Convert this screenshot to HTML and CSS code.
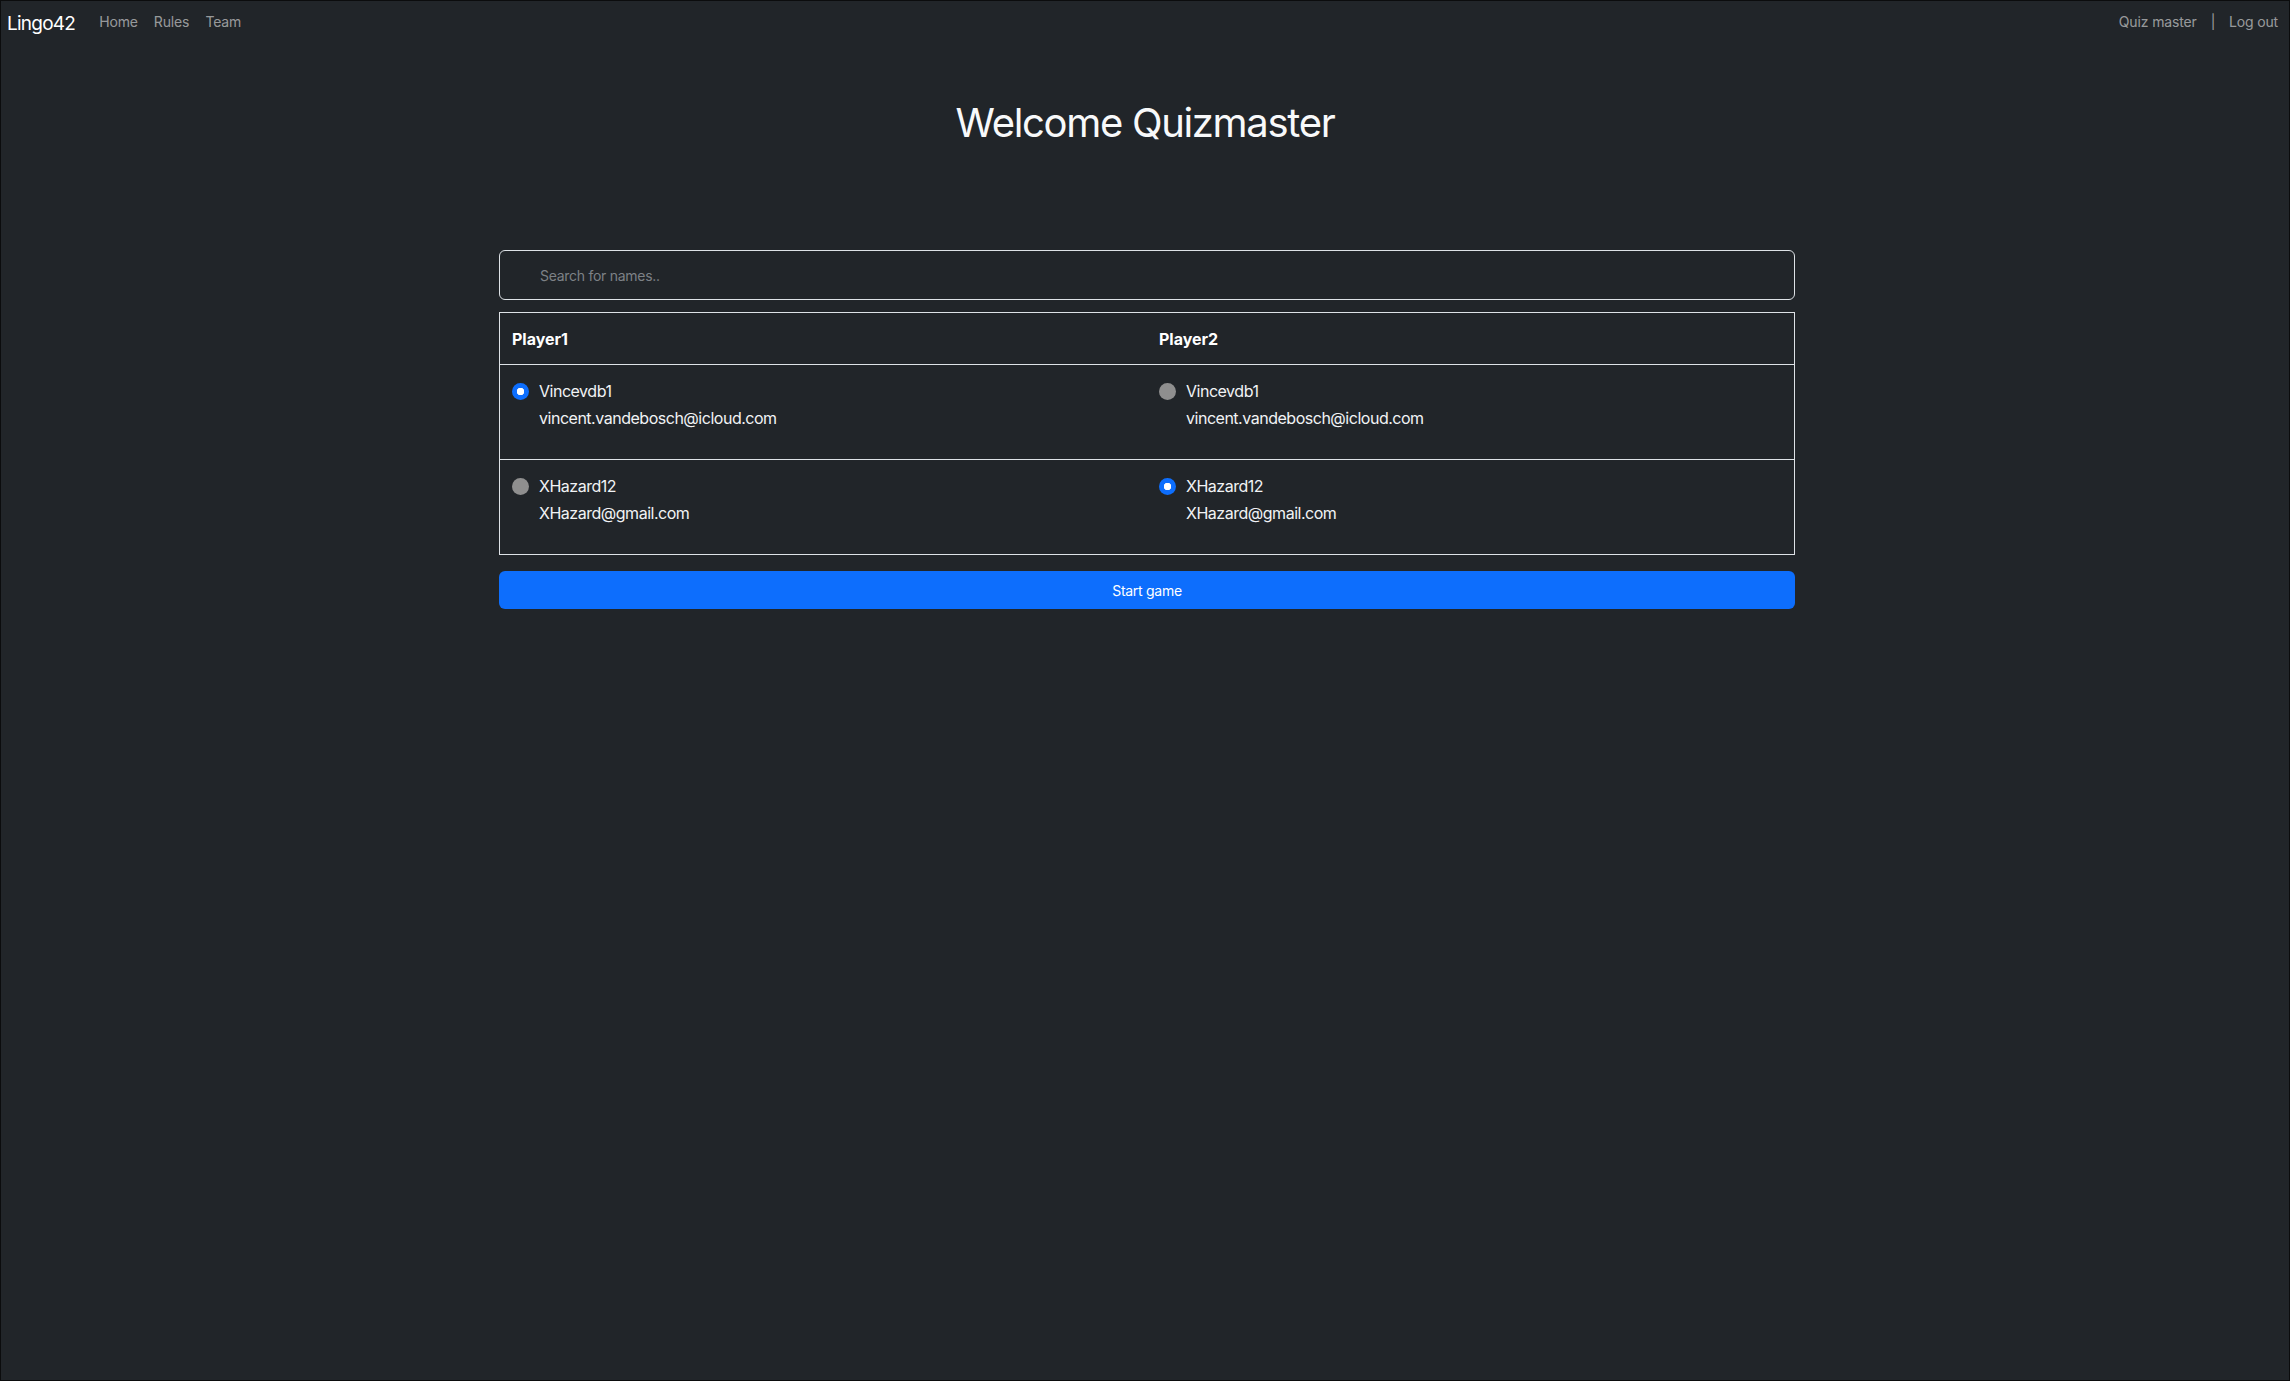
FILE: index.html
```html
<!DOCTYPE html>
<html lang="en">

<head>
    <meta charset="UTF-8">
    <meta name="viewport" content="width=device-width, initial-scale=1.0">
    <title>Lingo42</title>
    <link rel="stylesheet" href="styles.css">
</head>

<body>

    <nav class="navbar">
        <div class="left-section">
            <a class="brand" href="#">Lingo42</a>
            <a class="nav-link" href="#">Home</a>
            <a class="nav-link" href="#">Rules</a>
            <a class="nav-link" href="#">Team</a>
        </div>
        <div class="right-section">
            <a class="nav-link" href="#">Quiz master</a>
            <span class="divider">|</span>
            <a class="nav-link" href="#">Log out</a>
        </div>
    </nav>

    <h1 class="title">Welcome Quizmaster</h1>

    <div class="container">
        <input type="text" class="search" placeholder="Search for names..">

        <table class="players">
            <thead>
                <tr>
                    <th>Player1</th>
                    <th>Player2</th>
                </tr>
            </thead>
            <tbody>
                <tr>
                    <td>
                        <label class="player">
                            <span class="radio checked"></span>
                            <span class="name">Vincevdb1</span>
                        </label>
                        <div class="email">vincent.vandebosch@icloud.com</div>
                    </td>
                    <td>
                        <label class="player">
                            <span class="radio"></span>
                            <span class="name">Vincevdb1</span>
                        </label>
                        <div class="email">vincent.vandebosch@icloud.com</div>
                    </td>
                </tr>
                <tr>
                    <td>
                        <label class="player">
                            <span class="radio"></span>
                            <span class="name">XHazard12</span>
                        </label>
                        <div class="email">XHazard@gmail.com</div>
                    </td>
                    <td>
                        <label class="player">
                            <span class="radio checked"></span>
                            <span class="name">XHazard12</span>
                        </label>
                        <div class="email">XHazard@gmail.com</div>
                    </td>
                </tr>
            </tbody>
        </table>

        <button class="start">Start game</button>
    </div>

</body>

</html>
```

FILE: styles.css
```css
* {
    margin: 0;
    padding: 0;
    box-sizing: border-box;
}

html,
body {
    height: 100%;
}

body {
    font-family: Inter, "Noto Sans", sans-serif;
    font-size: 16px;
    line-height: 1.5;
    letter-spacing: -0.03em;
    color: #dee2e6;
    background-color: #212529;
    border: 1px solid #0b0c0d;
}

a {
    text-decoration: none;
}

/* Top bar */
.navbar {
    display: flex;
    justify-content: space-between;
    align-items: center;
    height: 46px;
    padding: 0 11px 0 6px;
}

.navbar .left-section,
.navbar .right-section {
    display: flex;
    align-items: center;
}

.brand {
    color: #ffffff;
    font-size: 19px;
    letter-spacing: -0.04em;
    margin-right: 16px;
}

.nav-link {
    color: rgba(255, 255, 255, 0.55);
    font-size: 14px;
    letter-spacing: -0.01em;
    padding: 0 8px 5px;
}

.right-section .nav-link:last-child {
    padding-right: 0;
}

.divider {
    color: rgba(255, 255, 255, 0.55);
    font-size: 14px;
    padding: 0 6px 5px;
}

.title {
    text-align: center;
    font-size: 40px;
    font-weight: 400;
    line-height: 1.2;
    letter-spacing: -0.033em;
    color: #f8f9fa;
    margin-top: 52px;
}

/* Main block */
.container {
    width: 1296px;
    margin: 103px 0 0 calc(50% - 646px);
}

.search {
    display: block;
    width: 100%;
    height: 50px;
    padding: 0 40px;
    font-family: inherit;
    font-size: 14px;
    letter-spacing: -0.02em;
    color: #dee2e6;
    background-color: #212529;
    border: 1px solid #dee2e6;
    border-radius: 6px;
    outline: none;
}

.search::placeholder {
    color: #7d8186;
}

.players {
    width: 100%;
    margin-top: 12px;
    border-collapse: collapse;
    border: 1px solid #dee2e6;
    table-layout: fixed;
}

.players th {
    text-align: left;
    font-weight: 700;
    letter-spacing: 0;
    color: #ffffff;
    padding: 14px 12px 13px;
    border-bottom: 1px solid #dee2e6;
}

.players td {
    vertical-align: top;
    padding: 14px 12px 13px;
    border-bottom: 1px solid #dee2e6;
}

.player {
    display: flex;
    align-items: center;
    margin-bottom: 3px;
    color: #f1f3f5;
}

.radio {
    width: 17px;
    height: 17px;
    border-radius: 50%;
    background-color: #8f8f8f;
    margin-right: 10px;
    flex-shrink: 0;
}

.radio.checked {
    background-color: #0d6efd;
    background-image: radial-gradient(circle, #ffffff 0, #ffffff 3.5px, transparent 4px);
}

.email {
    padding-left: 27px;
    margin-bottom: 16px;
    color: #f1f3f5;
}

.start {
    display: block;
    width: 100%;
    height: 38px;
    margin-top: 16px;
    font-family: inherit;
    font-size: 14px;
    letter-spacing: -0.02em;
    color: #ffffff;
    background-color: #0d6efd;
    border: none;
    border-radius: 6px;
    cursor: pointer;
}
```
